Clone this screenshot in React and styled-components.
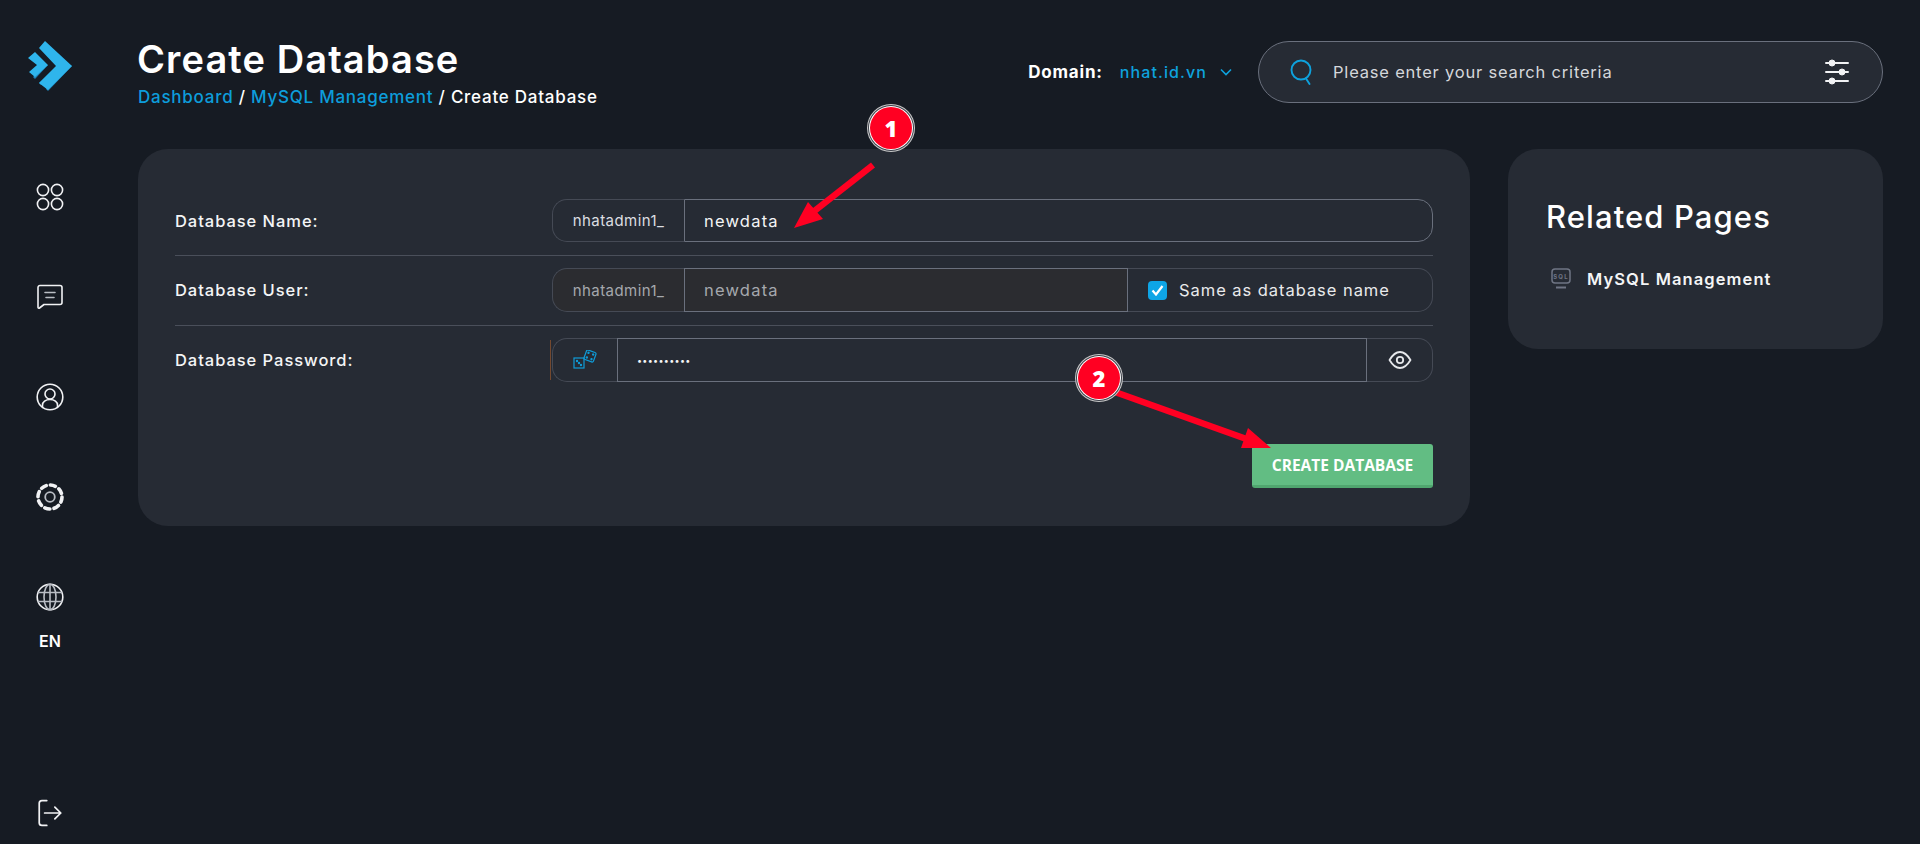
import styled, { createGlobalStyle } from "styled-components"

const GlobalStyle = createGlobalStyle`
    html, body {
        margin: 0;
        padding: 0;
        background: #161b23;
    }
    * {
        box-sizing: border-box;
    }
`

function Logo() {
    return (
        <LogoMark width="44" height="51" viewBox="0 0 44 51">
            <polygon points="11,42 28,26 30,28 13,44" fill="#1b82b8" />
            <polygon points="44,25 20,50 18,48 42,24" fill="#1b82b8" />
            <polygon points="17,0 44,25 20,49 11,42 28,25 11,7" fill="#2fb5ec" />
            <polygon points="20,24 7,38 5,36 18,24" fill="#1b82b8" />
            <polygon points="7,11 20,24 7,36 1,31 9,24 0,17" fill="#2fb5ec" />
        </LogoMark>
    )
}

function AppsIcon() {
    return (
        <IconSvg viewBox="0 0 28 28">
            <circle cx="7" cy="7" r="5.6" />
            <circle cx="21" cy="7" r="5.6" />
            <circle cx="7" cy="21" r="5.6" />
            <circle cx="21" cy="21" r="5.6" />
        </IconSvg>
    )
}

function ChatIcon() {
    return (
        <IconSvg viewBox="0 0 28 28">
            <path d="M2 4.500C2 3.200 2.900 2.500 4 2.500h20c1.200 0 2 .8 2 2v15c0 1.200-.8 2-2 2H8l-4.500 3.500c-.7.5-1.500.1-1.500-.8z" />
            <path d="M9 9.500h10M10 14.500h8" stroke="#b9bdc4" />
        </IconSvg>
    )
}

function UserIcon() {
    return (
        <IconSvg viewBox="0 0 28 28">
            <circle cx="14" cy="14" r="12.800" />
            <circle cx="14" cy="11" r="5" />
            <path d="M6.500 24.500v-2.500c0-3 3-5.500 7.500-5.500s7.500 2.500 7.500 5.500v2.500" />
        </IconSvg>
    )
}

function GearIcon() {
    return (
        <IconSvg viewBox="0 0 28 28">
            <circle cx="14" cy="14" r="12" strokeWidth="3.600" strokeDasharray="5.200 4.225" />
            <circle cx="14" cy="14" r="4.800" stroke="#b9bdc4" strokeWidth="1.800" />
        </IconSvg>
    )
}

function GlobeIcon() {
    return (
        <IconSvg viewBox="0 0 28 28">
            <circle cx="14" cy="14" r="12.800" />
            <ellipse cx="14" cy="14" rx="6" ry="12.800" stroke="#b9bdc4" />
            <path d="M2 9.500h24M2 18.500h24M14 1.500v25" stroke="#b9bdc4" />
        </IconSvg>
    )
}

function ExitIcon() {
    return (
        <IconSvg viewBox="0 0 24 26">
            <path d="M9 1.500H4.500C3 1.500 2 2.500 2 4v18c0 1.500 1 2.500 2.500 2.500H9" />
            <path d="M7 13h15M16.500 7.500 22 13l-5.500 5.500" />
        </IconSvg>
    )
}

function SearchIcon() {
    return (
        <svg width="24" height="26" viewBox="0 0 24 26" fill="none" stroke="#0ea2dd" strokeWidth="1.900">
            <circle cx="11" cy="11" r="9.500" />
            <path d="M16 19.500 19.500 25" strokeLinecap="round" />
        </svg>
    )
}

function FilterIcon() {
    return (
        <svg width="24" height="26" viewBox="0 0 24 26" fill="#f1f2f4" stroke="#f1f2f4">
            <path d="M1 4h22M1 13h22M1 22h22" strokeWidth="2" strokeLinecap="round" />
            <circle cx="7" cy="4" r="3" />
            <circle cx="17" cy="13" r="3" />
            <circle cx="7" cy="22" r="3" />
        </svg>
    )
}

function DiceIcon() {
    return (
        <svg width="24" height="20" viewBox="0 0 24 20" fill="none" stroke="#0f9bd7" strokeWidth="1.200">
            <rect x="1" y="8" width="10" height="10" />
            <g transform="rotate(20 17 6)">
                <rect x="12" y="1" width="10" height="10" rx="1.500" />
                <circle cx="14.500" cy="3.500" r=".6" fill="#0f9bd7" />
                <circle cx="19.500" cy="3.500" r=".6" fill="#0f9bd7" />
                <circle cx="14.500" cy="8.500" r=".6" fill="#0f9bd7" />
                <circle cx="19.500" cy="8.500" r=".6" fill="#0f9bd7" />
            </g>
            <circle cx="4" cy="11" r=".6" fill="#0f9bd7" />
            <circle cx="6" cy="13" r=".6" fill="#0f9bd7" />
            <circle cx="8" cy="15" r=".6" fill="#0f9bd7" />
        </svg>
    )
}

function EyeIcon() {
    return (
        <svg width="24" height="20" viewBox="0 0 24 20" fill="none" stroke="#e6e8eb" strokeWidth="1.800">
            <path d="M1.500 10 C4.500 5 8 2 12 2 s7.500 3 10.500 8 C19.500 15 16 18 12 18 S4.500 15 1.500 10z" strokeLinejoin="round" />
            <circle cx="12" cy="10" r="3.200" />
        </svg>
    )
}

function SqlIcon() {
    return (
        <svg width="20" height="22" viewBox="0 0 20 22" fill="none" stroke="#6f7584" strokeWidth="1.500">
            <rect x="1" y="1" width="18" height="14" rx="3" />
            <text x="10" y="10.500" textAnchor="middle" fontSize="6" fontWeight="700" fontFamily="Inter, sans-serif" fill="#6f7584" stroke="none">SQL</text>
            <path d="M5 19.500h10" strokeWidth="2" />
        </svg>
    )
}

function Annotations() {
    return (
        <>
            <ArrowLayer width="1920" height="844" viewBox="0 0 1920 844">
                <path d="M873 165 808 216" stroke="#ff0022" strokeWidth="6.500" />
                <polygon points="794,228 808,202 823,219" fill="#ff0022" />
                <path d="M1115 392 1252 441" stroke="#ff0022" strokeWidth="6.500" />
                <polygon points="1271,448 1248,428 1241,448" fill="#ff0022" />
            </ArrowLayer>
            <StepBadge $x={891} $y={128}>1</StepBadge>
            <StepBadge $x={1099} $y={378}>2</StepBadge>
        </>
    )
}

function App() {
    return (
        <Page>
            <GlobalStyle />
            <Sidebar>
                <Logo />
                <Nav>
                    <AppsIcon />
                    <ChatIcon />
                    <UserIcon />
                    <GearIcon />
                    <LangItem>
                        <GlobeIcon />
                        <LangCode>EN</LangCode>
                    </LangItem>
                </Nav>
                <ExitButton>
                    <ExitIcon />
                </ExitButton>
            </Sidebar>
            <Main>
                <Header>
                    <TitleBlock>
                        <Title>Create Database</Title>
                        <Breadcrumb>
                            <Crumb>Dashboard</Crumb> / <Crumb>MySQL Management</Crumb> / Create Database
                        </Breadcrumb>
                    </TitleBlock>
                    <HeaderRight>
                        <DomainPicker>
                            <DomainLabel>Domain:</DomainLabel>
                            <DomainValue>nhat.id.vn</DomainValue>
                            <svg width="12" height="8" viewBox="0 0 12 8" fill="none" stroke="#0ea2dd" strokeWidth="1.600">
                                <path d="M1 1.500 6 6.500 11 1.500" />
                            </svg>
                        </DomainPicker>
                        <SearchBox>
                            <SearchIcon />
                            <SearchInput placeholder="Please enter your search criteria" />
                            <FilterIcon />
                        </SearchBox>
                    </HeaderRight>
                </Header>
                <Content>
                    <FormCard>
                        <FormRow>
                            <Label>Database Name:</Label>
                            <InputGroup $height={43}>
                                <Addon $width={132}>nhatadmin1_</Addon>
                                <Field readOnly value="newdata" />
                            </InputGroup>
                        </FormRow>
                        <FormRow>
                            <Label>Database User:</Label>
                            <InputGroup>
                                <Addon $width={132} $disabled>nhatadmin1_</Addon>
                                <Field readOnly value="newdata" $disabled />
                                <CheckAddon>
                                    <CheckBox>
                                        <svg width="13" height="11" viewBox="0 0 13 11" fill="none" stroke="#fff" strokeWidth="2.200">
                                            <path d="M1.500 5.500 5 9.500 11.500 1" />
                                        </svg>
                                    </CheckBox>
                                    Same as database name
                                </CheckAddon>
                            </InputGroup>
                        </FormRow>
                        <FormRow $last>
                            <Label>Database Password:</Label>
                            <InputGroup $marked>
                                <Addon $width={65}>
                                    <DiceIcon />
                                </Addon>
                                <Field readOnly type="password" value="1234567890" $dots />
                                <EyeAddon>
                                    <EyeIcon />
                                </EyeAddon>
                            </InputGroup>
                        </FormRow>
                        <Actions>
                            <SubmitButton>Create Database</SubmitButton>
                        </Actions>
                    </FormCard>
                    <RelatedCard>
                        <RelatedTitle>Related Pages</RelatedTitle>
                        <RelatedLink>
                            <SqlIcon />
                            MySQL Management
                        </RelatedLink>
                    </RelatedCard>
                </Content>
            </Main>
            <Annotations />
        </Page>
    )
}

export default App

const sans = `Inter, "Noto Sans", sans-serif`

const Page = styled.div`
    position: relative;
    display: flex;
    width: 100%;
    height: 100vh;
    overflow: hidden;
    background: #161b23;
    color: #fff;
    font-family: ${sans};
`
const Sidebar = styled.aside`
    flex: 0 0 138px;
    display: flex;
    flex-direction: column;
    align-items: center;
    padding: 41px 38px 19px 0;
`
const LogoMark = styled.svg`
    flex: none;
`
const Nav = styled.nav`
    display: flex;
    flex-direction: column;
    align-items: center;
    gap: 72px;
    margin-top: 91px;
`
// set as attributes so a path inside can still override stroke and width
const IconSvg = styled.svg.attrs({
    fill: "none",
    stroke: "#f1f2f4",
    strokeWidth: 1.6,
    strokeLinecap: "round",
    strokeLinejoin: "round",
})`
    width: 28px;
    height: 28px;
`
const LangItem = styled.div`
    display: flex;
    flex-direction: column;
    align-items: center;
    gap: 23px;
`
const LangCode = styled.span`
    font-size: 16px;
    font-weight: 600;
    line-height: 14px;
`
const ExitButton = styled.div`
    margin-top: auto;
    height: 26px;
`
const Main = styled.main`
    flex: 1;
    min-width: 0;
    padding-right: 37px;
`
const Header = styled.header`
    height: 149px;
    padding-top: 40px;
    display: flex;
    justify-content: space-between;
    align-items: flex-start;
`
const TitleBlock = styled.div`
    display: flex;
    flex-direction: column;
`
const Title = styled.h1`
    margin: 0 0 0 -1px;
    font-size: 38px;
    font-weight: 600;
    line-height: 38px;
    letter-spacing: 1.1px;
`
const Breadcrumb = styled.div`
    margin-top: 7px;
    font-size: 17px;
    font-weight: 500;
    line-height: 24px;
    letter-spacing: 0.75px;
`
const Crumb = styled.span`
    color: #0d9ddb;
`
const HeaderRight = styled.div`
    display: flex;
    align-items: center;
    gap: 26px;
    margin-top: 1px;
`
const DomainPicker = styled.div`
    display: flex;
    align-items: center;
    font-size: 16px;
`
const DomainLabel = styled.span`
    font-size: 17px;
    font-weight: 700;
    letter-spacing: 0.8px;
    margin-right: 17px;
`
const DomainValue = styled.span`
    color: #0ea2dd;
    font-weight: 500;
    letter-spacing: 1.1px;
    margin-right: 13px;
`
const SearchBox = styled.div`
    width: 625px;
    height: 62px;
    display: flex;
    align-items: center;
    padding: 0 33px 0 31px;
    gap: 19px;
    background: #262b34;
    border: 1px solid #6a707d;
    border-radius: 31px;
`
const SearchInput = styled.input`
    flex: 1;
    min-width: 0;
    padding: 0;
    background: none;
    border: none;
    outline: none;
    font-family: ${sans};
    font-size: 16.5px;
    letter-spacing: 0.8px;
    &::placeholder {
        color: #d5d7db;
        opacity: 1;
    }
`
const Content = styled.div`
    display: flex;
    align-items: flex-start;
    gap: 38px;
`
const FormCard = styled.section`
    flex: 1;
    min-width: 0;
    padding: 50px 37px 38px;
    background: #262b34;
    border-radius: 30px;
`
const FormRow = styled.div`
    display: grid;
    grid-template-columns: 377px 1fr;
    align-items: center;
    padding-bottom: ${(props) => (props.$last ? "0" : "13px")};
    margin-bottom: ${(props) => (props.$last ? "0" : "12px")};
    border-bottom: ${(props) => (props.$last ? "none" : "1px solid #4a4f5a")};
`
const Label = styled.label`
    font-size: 16.5px;
    font-weight: 500;
    letter-spacing: 0.95px;
    color: #f4f5f6;
`
const InputGroup = styled.div`
    position: relative;
    display: flex;
    height: ${(props) => props.$height || 44}px;
    ${(props) =>
        props.$marked &&
        `&::before {
            content: "";
            position: absolute;
            left: -2px;
            top: 2px;
            bottom: 2px;
            width: 1px;
            background: #74492f;
        }`}
`
const Addon = styled.div`
    flex: 0 0 ${(props) => props.$width}px;
    display: flex;
    align-items: center;
    justify-content: center;
    font-size: 15px;
    letter-spacing: 0.45px;
    color: ${(props) => (props.$disabled ? "#a5a8ad" : "#dcdee1")};
    background: ${(props) => (props.$disabled ? "#2b2c30" : "transparent")};
    border: 1px solid #454a55;
    border-right: none;
    border-radius: 15px 0 0 15px;
`
const Field = styled.input`
    flex: 1;
    min-width: 0;
    padding: 0 19px;
    font-family: ${sans};
    font-size: ${(props) => (props.$dots ? "9px" : "16.5px")};
    letter-spacing: ${(props) => (props.$dots ? "0.3px" : "1.2px")};
    color: ${(props) => (props.$disabled ? "#a5a8ad" : "#f4f5f6")};
    background: ${(props) => (props.$disabled ? "#2b2c30" : "transparent")};
    border: 1px solid #6a707d;
    outline: none;
    &:last-child {
        border-radius: 0 15px 15px 0;
    }
`
const CheckAddon = styled.div`
    flex: 0 0 305px;
    display: flex;
    align-items: center;
    gap: 12px;
    padding-left: 20px;
    font-size: 16.5px;
    letter-spacing: 0.95px;
    color: #e9eaec;
    border: 1px solid #454a55;
    border-left: none;
    border-radius: 0 15px 15px 0;
`
const CheckBox = styled.span`
    width: 19px;
    height: 19px;
    display: flex;
    align-items: center;
    justify-content: center;
    background: #0ea5e6;
    border-radius: 4px;
`
const EyeAddon = styled.div`
    flex: 0 0 66px;
    display: flex;
    align-items: center;
    justify-content: center;
    border: 1px solid #454a55;
    border-left: none;
    border-radius: 0 15px 15px 0;
`
const Actions = styled.div`
    display: flex;
    justify-content: flex-end;
    margin-top: 62px;
`
const SubmitButton = styled.button`
    width: 181px;
    height: 44px;
    padding: 0;
    background: #62bd83;
    border: none;
    border-bottom: 3px solid #50a66f;
    border-radius: 3px;
    font-family: "Open Sans", sans-serif;
    font-size: 15.5px;
    font-weight: 700;
    color: #fff;
    text-transform: uppercase;
`
const RelatedCard = styled.aside`
    flex: 0 0 375px;
    height: 200px;
    padding: 48px 38px;
    background: #262b34;
    border-radius: 30px;
`
const RelatedTitle = styled.h2`
    margin: 0;
    font-size: 31px;
    font-weight: 500;
    line-height: 40px;
    letter-spacing: 1.1px;
`
const RelatedLink = styled.div`
    display: flex;
    align-items: center;
    gap: 16px;
    margin-top: 31px;
    padding-left: 5px;
    font-size: 16.5px;
    font-weight: 600;
    letter-spacing: 1.1px;
    color: #f4f5f6;
`
const ArrowLayer = styled.svg`
    position: absolute;
    top: 0;
    left: 0;
    pointer-events: none;
`
const StepBadge = styled.div`
    position: absolute;
    left: ${(props) => props.$x - 21}px;
    top: ${(props) => props.$y - 21}px;
    width: 42px;
    height: 42px;
    display: flex;
    align-items: center;
    justify-content: center;
    background: #ff0022;
    border-radius: 50%;
    box-shadow: 0 0 0 1px #fff, 0 0 0 2px #3a3f48, 0 0 0 3px #c8c8c8;
    font-family: "Open Sans", sans-serif;
    font-size: 22px;
    font-weight: 800;
    color: #fff;
`
